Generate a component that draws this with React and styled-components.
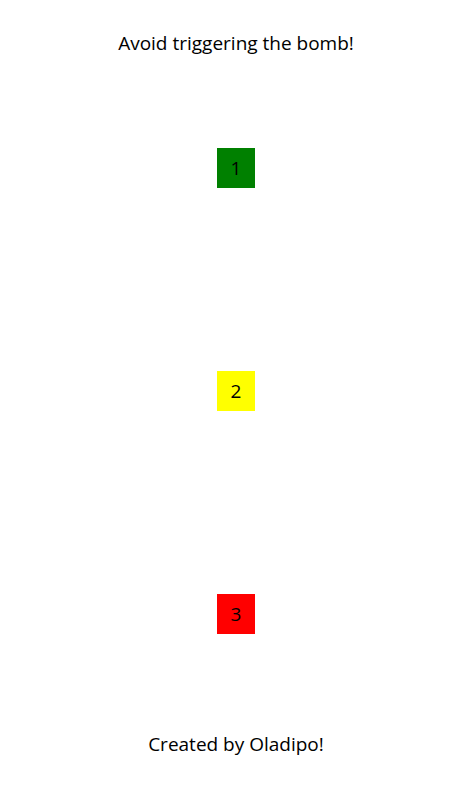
import React from 'react';
import styled, { createGlobalStyle } from 'styled-components';

const GlobalStyle = createGlobalStyle`
    html, body {
        margin: 0;
        padding: 0;
        background: #fff;
    }
    body {
        font-family: "Open Sans", "Noto Sans", sans-serif;
        color: #000;
    }
`;

const boxes = [
    { id: 1, color: '#008000' },
    { id: 2, color: '#ffff00' },
    { id: 3, color: '#ff0000' },
];

const App = () => {
    return (
        <>
            <GlobalStyle />
            <Page>
                <Title>Avoid triggering the bomb!</Title>
                <Board>
                    {boxes.map((b) => (
                        <Box key={b.id} $color={b.color}>{b.id}</Box>
                    ))}
                </Board>
                <Footer>Created by Oladipo!</Footer>
            </Page>
        </>
    );
};

export default App;

const Page = styled.div`
    width: 100%;
    height: 787px;
    display: flex;
    flex-direction: column;
    align-items: center;
    padding-top: 30px;
    box-sizing: border-box;
`;

const Title = styled.h1`
    margin: 0;
    font-size: 19px;
    font-weight: 400;
    line-height: 26px;
`;

const Board = styled.div`
    display: flex;
    flex-direction: column;
    align-items: center;
    gap: 183px;
    margin-top: 92px;
`;

const Box = styled.div`
    width: 38px;
    height: 40px;
    display: flex;
    align-items: center;
    justify-content: center;
    background-color: ${(p) => p.$color};
    font-size: 19px;
    cursor: pointer;
`;

const Footer = styled.footer`
    margin-top: 97px;
    font-size: 19px;
    line-height: 26px;
`;
